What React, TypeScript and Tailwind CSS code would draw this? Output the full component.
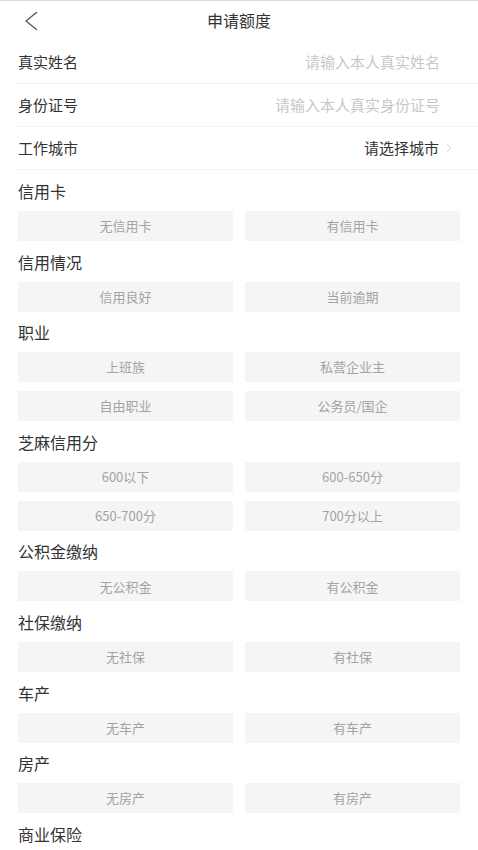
import { ChevronRight } from 'lucide-react'

const font = { fontFamily: '"Noto Sans CJK SC", "Noto Sans", sans-serif' }

interface Section {
  title: string
  options: string[]
}

// the last section's options sit below the fold
const sections: Section[] = [
  { title: '信用卡', options: ['无信用卡', '有信用卡'] },
  { title: '信用情况', options: ['信用良好', '当前逾期'] },
  { title: '职业', options: ['上班族', '私营企业主', '自由职业', '公务员/国企'] },
  { title: '芝麻信用分', options: ['600以下', '600-650分', '650-700分', '700分以上'] },
  { title: '公积金缴纳', options: ['无公积金', '有公积金'] },
  { title: '社保缴纳', options: ['无社保', '有社保'] },
  { title: '车产', options: ['无车产', '有车产'] },
  { title: '房产', options: ['无房产', '有房产'] },
  { title: '商业保险', options: [] }
]

function InputRow({ label, placeholder }: { label: string; placeholder: string }) {
  return (
    <div className="ml-[16px] flex h-[43px] items-center border-b border-[#f2f2f2] pl-[2px] pr-[38px]">
      <span className="text-[15px] text-[#333]">{label}</span>
      <input
        className="ml-auto w-[200px] bg-transparent text-right text-[15px] text-[#333] outline-none placeholder:text-[#c8c8c8]"
        style={font}
        placeholder={placeholder}
      />
    </div>
  )
}

export default function App() {
  return (
    <div className="h-[850px] w-full overflow-hidden bg-white" style={font}>
      <div className="h-px bg-[#dcdcdc]" />
      <div className="relative flex h-[40px] items-center justify-center">
        <svg
          width="14"
          height="20"
          viewBox="0 0 14 20"
          className="absolute left-[24px] top-[10px]"
          fill="none"
          stroke="#555"
          strokeWidth="1.3"
          strokeLinecap="round"
          strokeLinejoin="round"
        >
          <polyline points="12.5,1.5 2,10 12.5,18.5" />
        </svg>
        <span className="mb-[2px] text-[16px] text-[#333]">申请额度</span>
      </div>

      <InputRow label="真实姓名" placeholder="请输入本人真实姓名" />
      <InputRow label="身份证号" placeholder="请输入本人真实身份证号" />
      <div className="ml-[16px] flex h-[43px] items-center border-b border-[#f2f2f2] pl-[2px] pr-[22px]">
        <span className="text-[15px] text-[#333]">工作城市</span>
        <span className="ml-auto text-[15px] text-[#333]">请选择城市</span>
        <ChevronRight size={14} strokeWidth={1.2} className="ml-[3px] text-[#bbb]" />
      </div>

      <div className="px-[18px] pt-[10px]">
        {sections.map(s => (
          <div key={s.title} className="mb-[9.6px]">
            <div className="flex h-[22px] items-center text-[16px] text-[#333]">{s.title}</div>
            {s.options.length > 0 && (
              <div className="mt-[9px] grid grid-cols-2 gap-x-[12px] gap-y-[9px]">
                {s.options.map(o => (
                  <button
                    key={o}
                    className="h-[30px] bg-[#f5f5f5] text-[13px] text-[#a3a3a3]"
                    style={font}
                  >
                    {o}
                  </button>
                ))}
              </div>
            )}
          </div>
        ))}
      </div>
    </div>
  )
}
